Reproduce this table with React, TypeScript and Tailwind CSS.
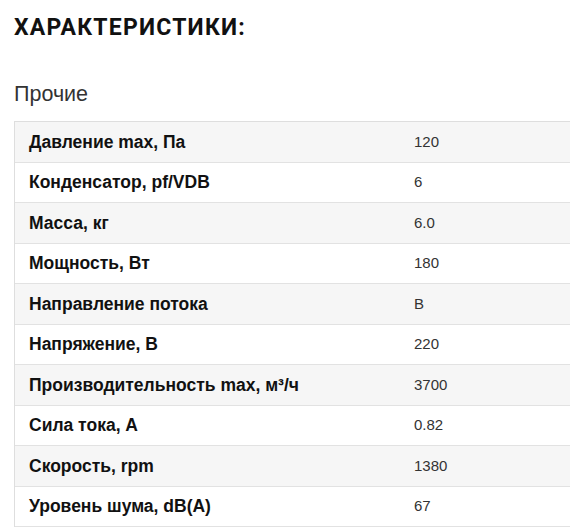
import React from "react";

const rows: [string, string][] = [
  ["Давление max, Па", "120"],
  ["Конденсатор, pf/VDB", "6"],
  ["Масса, кг", "6.0"],
  ["Мощность, Вт", "180"],
  ["Направление потока", "В"],
  ["Напряжение, В", "220"],
  ["Производительность max, м³/ч", "3700"],
  ["Сила тока, А", "0.82"],
  ["Скорость, rpm", "1380"],
  ["Уровень шума, dB(A)", "67"],
];

export default function App() {
  return (
    <div className="w-[570px] h-[529px] overflow-hidden bg-white pl-[14px] pt-[14px] font-['Liberation_Sans',Arial,sans-serif]">
      <h2 className="font-['Roboto',sans-serif] font-bold text-[23px] leading-[28px] tracking-[1.2px] text-[#111]">
        ХАРАКТЕРИСТИКИ:
      </h2>
      <div className="mt-[40px] text-[21.5px] leading-[24px] text-[#333]">Прочие</div>
      <div className="mt-[15px] w-[600px] border-l border-t border-[#dedede]">
        {rows.map(([k, v], i) => (
          <div
            key={k}
            className={`flex items-center h-[40.5px] border-b border-[#e2e2e2] ${i % 2 === 0 ? "bg-[#f6f6f6]" : "bg-white"}`}
          >
            <div className="w-[399px] pl-[14px] font-bold text-[17.5px] text-[#111]">{k}</div>
            <div className="text-[15px] text-[#333]">{v}</div>
          </div>
        ))}
      </div>
    </div>
  );
}
